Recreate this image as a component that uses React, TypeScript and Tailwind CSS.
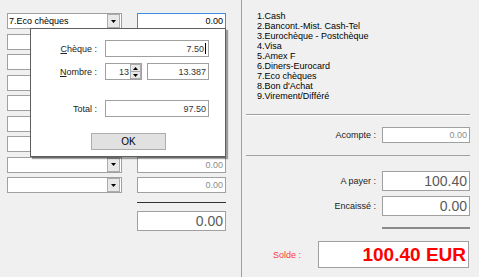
import React from 'react';

const rows = [
  { label: '7.Eco chèques', focused: true },
  { label: '' },
  { label: '' },
  { label: '' },
  { label: '' },
  { label: '' },
  { label: '' },
  { label: '' },
  { label: '' },
];

const modes = [
  '1.Cash',
  '2.Bancont.-Mist. Cash-Tel',
  '3.Eurochèque - Postchèque',
  '4.Visa',
  '5.Amex F',
  '6.Diners-Eurocard',
  '7.Eco chèques',
  "8.Bon d'Achat",
  '9.Virement/Différé',
];

function DropArrow() {
  return (
    <div className="flex h-full w-[13px] items-center justify-center border border-[#acacac] bg-[#e8e8e8]">
      <svg width="5" height="3" viewBox="0 0 5 3">
        <path d="M0 0H5L2.5 3Z" fill="#000" />
      </svg>
    </div>
  );
}

function Combo({ label }: { label: string }) {
  return (
    <div className="flex h-[16px] w-[115px] items-center border border-[#a0a0a0] bg-white pl-[1px] pr-[1px]">
      <span className="flex-1 truncate text-black">{label}</span>
      <div className="h-[14px] py-0">
        <DropArrow />
      </div>
    </div>
  );
}

export default function App() {
  return (
    <div className="relative flex h-[277px] w-[479px] overflow-hidden bg-[#f0f0f0] font-['Liberation_Sans',Arial,sans-serif] text-[9px] leading-[10px] text-black">
      {/* Left: payment rows */}
      <div className="w-[241px] shrink-0 pl-[7px] pt-[13px]">
        <div className="flex flex-col gap-[4.5px]">
          {rows.map((r, i) => (
            <div key={i} className="flex items-center gap-[15px]">
              <Combo label={r.label} />
              <div
                className={`flex h-[16px] w-[89px] items-center justify-end border bg-white pr-[2px] ${
                  r.focused ? 'border-[#3d8ee0] text-black' : 'border-[#a0a0a0] text-[#8c8c8c]'
                }`}
              >
                0.00
              </div>
            </div>
          ))}
        </div>
        <div className="ml-[130px] mt-[9px] h-px w-[89px] bg-[#333]" />
        <div className="ml-[130px] mt-[8px] flex h-[20px] w-[89px] items-center justify-end border border-[#a0a0a0] bg-white pr-[2px] text-[14px] text-[#5a5a5a]">
          0.00
        </div>
      </div>

      {/* Right: summary */}
      <div className="flex flex-1 flex-col border-l border-[#a0a0a0]">
        <div className="pl-[15px] pt-[11px]">
          {modes.map(m => (
            <div key={m} className="h-[10px] whitespace-nowrap">{m}</div>
          ))}
        </div>
        <div className="ml-[4px] mr-[9px] mt-[13px] h-[2px] border-t border-b border-t-[#a0a0a0] border-b-white" />
        <div className="mt-[11px] flex items-center justify-end gap-[6px] pr-[9px]">
          <span className="text-[#222]">Acompte :</span>
          <div className="flex h-[16px] w-[88px] items-center justify-end border border-[#a0a0a0] bg-white pr-[2px] text-[#8c8c8c]">
            0.00
          </div>
        </div>
        <div className="ml-[4px] mr-[9px] mt-[12px] h-px bg-[#a0a0a0]" />
        <div className="mt-[15px] flex items-center justify-end gap-[6px] pr-[9px]">
          <span className="text-[#222]">A payer :</span>
          <div className="flex h-[20px] w-[88px] items-center justify-end border border-[#a0a0a0] bg-white pr-[2px] text-[14px] text-[#5a5a5a]">
            100.40
          </div>
        </div>
        <div className="mt-[5px] flex items-center justify-end gap-[6px] pr-[9px]">
          <span className="text-[#222]">Encaissé :</span>
          <div className="flex h-[20px] w-[88px] items-center justify-end border border-[#a0a0a0] bg-white pr-[2px] text-[14px] text-[#5a5a5a]">
            0.00
          </div>
        </div>
        <div className="mt-[11px] flex justify-end pr-[9px]">
          <div className="h-[2px] w-[88px] bg-[#8a8a8a]" />
        </div>
        <div className="mt-[12px] flex items-center pl-[31px] pr-[10px]">
          <span className="text-[#ff3b3b]">Solde :</span>
          <div className="flex-1" />
          <div className="flex h-[27px] w-[151px] items-center justify-end border border-[#a0a0a0] bg-white pr-[2px] text-[19px] font-bold text-[#ff0000]">
            100.40 EUR
          </div>
        </div>
      </div>

      {/* Dialog overlay */}
      <div className="absolute left-[30px] top-[28px] flex h-[129px] w-[196px] flex-col border border-[#5f5f5f] bg-white pt-[11px] shadow-[2px_2px_1px_rgba(0,0,0,0.35)]">
        <div className="flex items-center">
          <span className="w-[70px] pr-[4px] text-right text-[#222]">
            <span className="underline">C</span>hèque :
          </span>
          <div className="ml-[4px] flex h-[17px] w-[104px] items-center justify-end border border-[#a0a0a0] bg-white pr-[2px] text-[#333]">
            7.50<span className="ml-px inline-block h-[11px] w-px bg-black" />
          </div>
        </div>
        <div className="mt-[6px] flex items-center">
          <span className="w-[70px] pr-[4px] text-right text-[#222]">
            <span className="underline">N</span>ombre :
          </span>
          <div className="ml-[4px] flex h-[17px] w-[37px] items-center border border-[#a0a0a0] bg-white">
            <span className="flex-1 pr-[1px] text-right text-[#333]">13</span>
            <div className="flex h-full w-[11px] flex-col">
              <div className="flex flex-1 items-center justify-center border border-[#acacac] bg-[#e8e8e8]">
                <svg width="5" height="3" viewBox="0 0 5 3">
                  <path d="M0 3H5L2.5 0Z" fill="#000" />
                </svg>
              </div>
              <div className="flex flex-1 items-center justify-center border border-t-0 border-[#acacac] bg-[#e8e8e8]">
                <svg width="5" height="3" viewBox="0 0 5 3">
                  <path d="M0 0H5L2.5 3Z" fill="#000" />
                </svg>
              </div>
            </div>
          </div>
          <div className="ml-[5px] flex h-[17px] w-[62px] items-center justify-end border border-[#a0a0a0] bg-white pr-[2px] text-[#333]">
            13.387
          </div>
        </div>
        <div className="mt-[20px] flex items-center">
          <span className="w-[70px] pr-[4px] text-right text-[#222]">Total :</span>
          <div className="ml-[4px] flex h-[17px] w-[104px] items-center justify-end border border-[#a0a0a0] bg-white pr-[2px] text-[#333]">
            97.50
          </div>
        </div>
        <div className="ml-[60px] mt-[16px] flex h-[17px] w-[75px] items-center justify-center border border-[#adadad] bg-[#e1e1e1] text-[10px] text-black">
          OK
        </div>
      </div>
    </div>
  );
}
